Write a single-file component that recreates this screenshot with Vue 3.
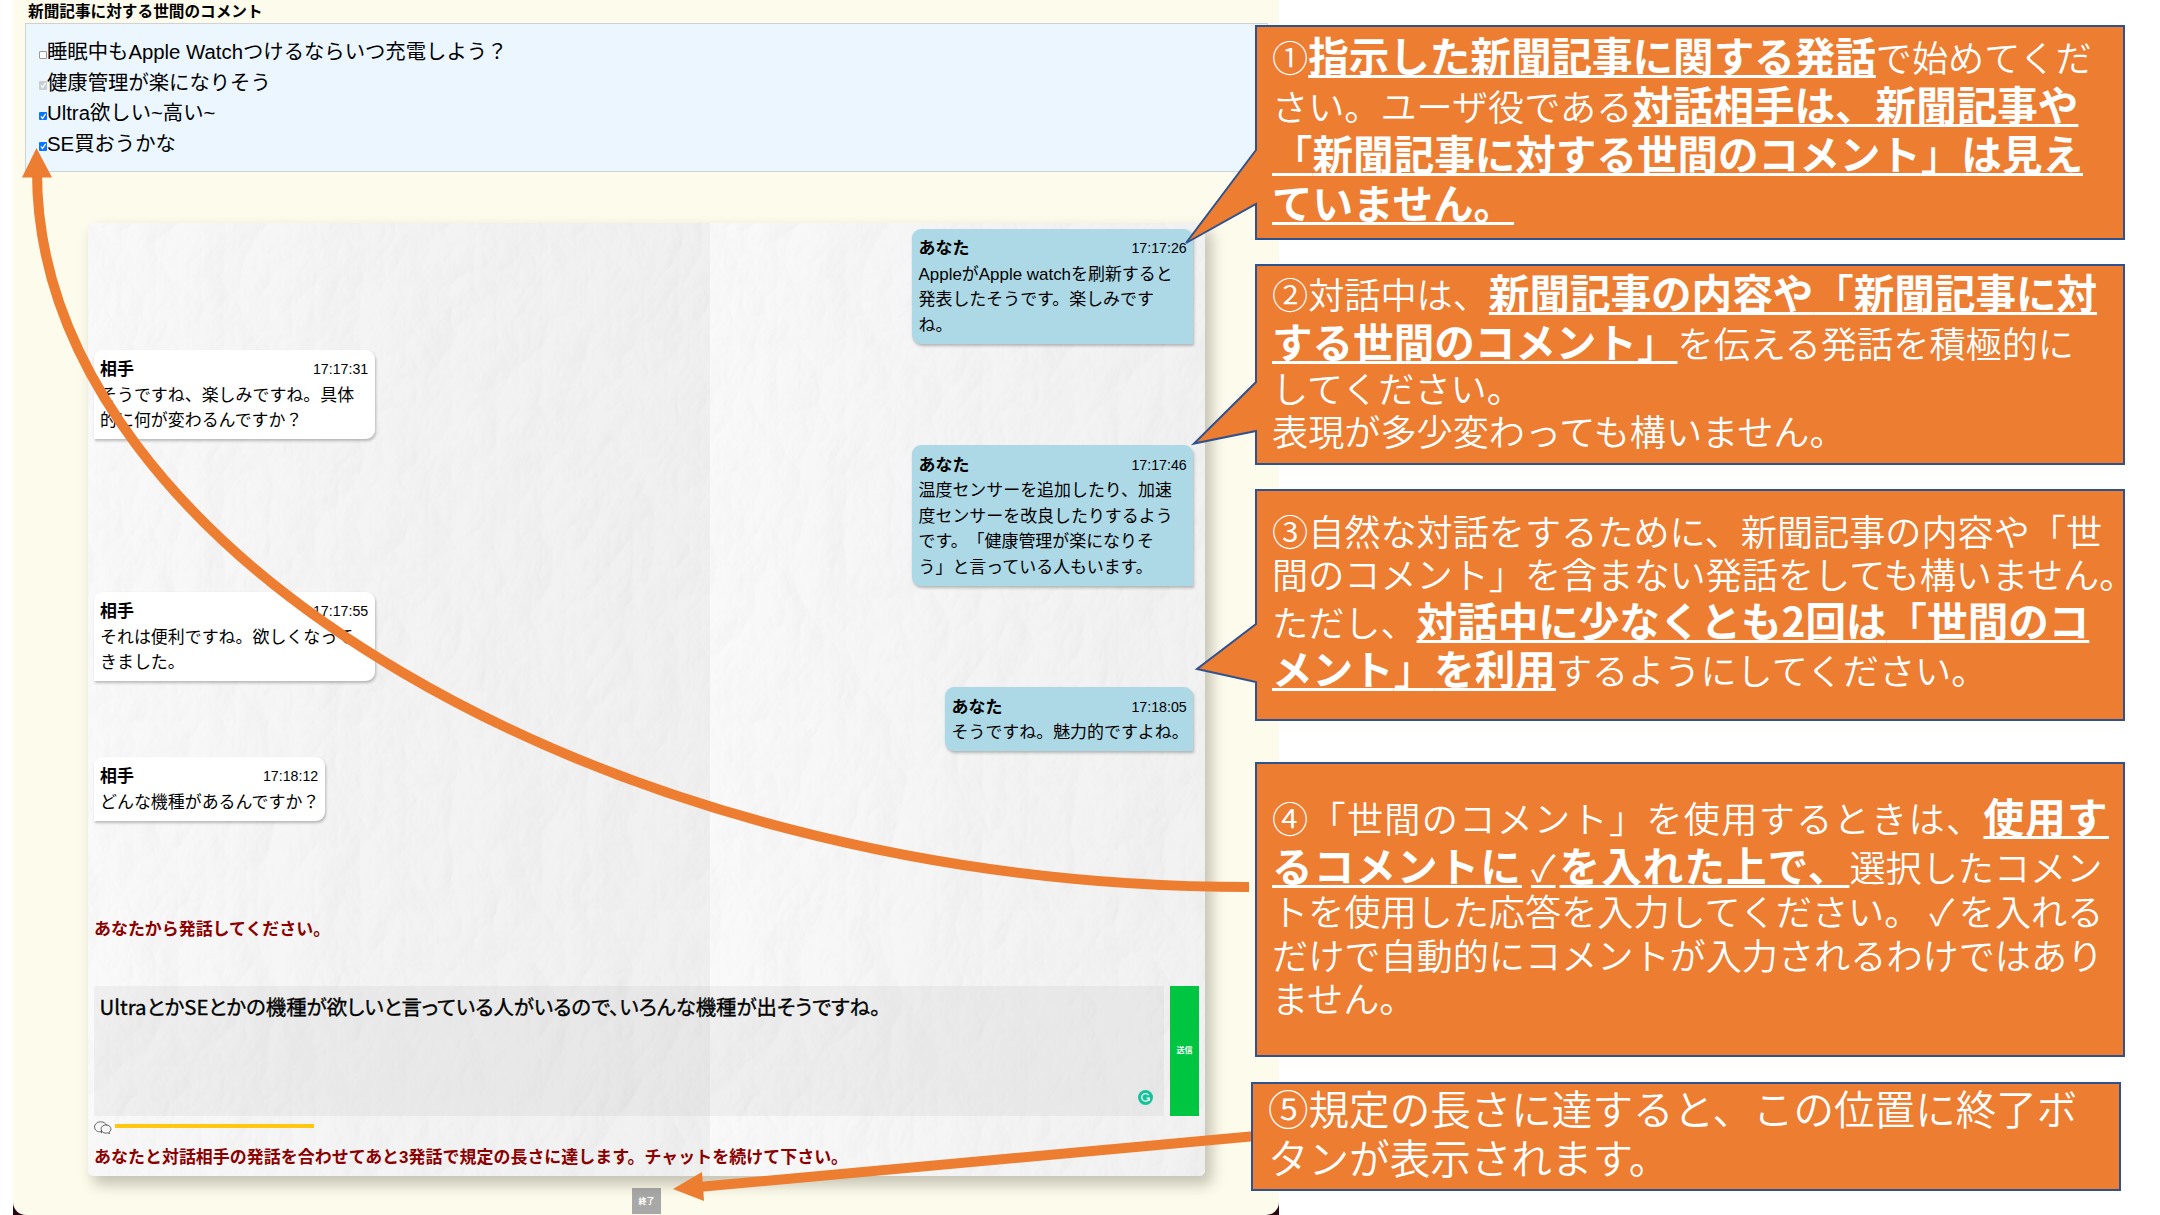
<script setup>
const comments = [
  { text: '睡眠中もApple Watchつけるならいつ充電しよう？', state: 'empty' },
  { text: '健康管理が楽になりそう', state: 'disabled' },
  { text: 'Ultra欲しい~高い~', state: 'checked' },
  { text: 'SE買おうかな', state: 'checked' },
]

const messages = [
  { me: true, time: '17:17:26', lines: ['AppleがApple watchを刷新すると', '発表したそうです。楽しみです', 'ね。'] },
  { me: false, time: '17:17:31', lines: ['そうですね、楽しみですね。具体', '的に何が変わるんですか？'] },
  { me: true, time: '17:17:46', lines: ['温度センサーを追加したり、加速', '度センサーを改良したりするよう', 'です。「健康管理が楽になりそ', 'う」と言っている人もいます。'] },
  { me: false, time: '17:17:55', lines: ['それは便利ですね。欲しくなって', 'きました。'] },
  { me: true, time: '17:18:05', short: true, lines: ['そうですね。魅力的ですよね。'] },
  { me: false, time: '17:18:12', short: true, lines: ['どんな機種があるんですか？'] },
]

// Each segment: [text, kind]; kind b = bold underlined, k = thin bracket inside bold text
const notes = [
  {
    id: 'n1',
    lines: [
      { big: true, segs: [['①', 'r'], ['指示した新聞記事に関する発話', 'b'], ['で始めてくだ', 'r']] },
      { big: true, segs: [['さい。ユーザ役である', 'r'], ['対話相手は、新聞記事や', 'b']] },
      { big: true, segs: [['「', 'k'], ['新聞記事に対する世間のコメント', 'b'], ['」', 'k'], ['は見え', 'b']] },
      { big: true, segs: [['ていません。', 'b']] },
    ],
  },
  {
    id: 'n2',
    lines: [
      { big: true, segs: [['②対話中は、', 'r'], ['新聞記事の内容や', 'b'], ['「', 'k'], ['新聞記事に対', 'b']] },
      { big: true, segs: [['する世間のコメント', 'b'], ['」', 'k'], ['を伝える発話を積極的に', 'r']] },
      { segs: [['してください。', 'r']] },
      { segs: [['表現が多少変わっても構いません。', 'r']] },
    ],
  },
  {
    id: 'n3',
    lines: [
      { segs: [['③自然な対話をするために、新聞記事の内容や「世', 'r']] },
      { segs: [['間のコメント」を含まない発話をしても構いません。', 'r']] },
      { big: true, segs: [['ただし、', 'r'], ['対話中に少なくとも2回は', 'b'], ['「', 'k'], ['世間のコ', 'b']] },
      { big: true, segs: [['メント', 'b'], ['」', 'k'], ['を利用', 'b'], ['するようにしてください。', 'r']] },
    ],
  },
  {
    id: 'n4',
    lines: [
      { big: true, wide: true, segs: [['④「世間のコメント」を使用するときは、', 'r'], ['使用す', 'b']] },
      { big: true, semi: true, segs: [['るコメントに', 'b'], ['✓', 'k tick'], ['を入れた上で、', 'b'], ['選択したコメン', 'r']] },
      { segs: [['トを使用した応答を入力してください。', 'r'], ['✓', 'r tick'], ['を入れる', 'r']] },
      { segs: [['だけで自動的にコメントが入力されるわけではあり', 'r']] },
      { segs: [['ません。', 'r']] },
    ],
  },
  {
    id: 'n5',
    lines: [
      { big: true, segs: [['⑤規定の長さに達すると、この位置に終了ボ', 'h']] },
      { big: true, segs: [['タンが表示されます。', 'h']] },
    ],
  },
]
</script>

<template>
  <div class="stage">
    <div class="desktop">
      <main class="window">
        <h1 class="title">新聞記事に対する世間のコメント</h1>
        <section class="comments">
          <label v-for="c in comments" :key="c.text" class="comment">
            <span class="box" :class="c.state">
              <svg v-if="c.state !== 'empty'" viewBox="0 0 8 8"><path d="M1.8 4.2 3.3 6 6.3 1.8" fill="none" stroke="#fff" stroke-width="1.2" /></svg>
            </span>
            <span>{{ c.text }}</span>
          </label>
        </section>

        <section class="chat">
          <svg class="paper" width="1117" height="953" viewBox="0 0 1117 953">
            <defs>
              <filter id="plaster" x="0" y="0" width="100%" height="100%" color-interpolation-filters="sRGB">
                <feTurbulence type="turbulence" baseFrequency="0.011 0.008" numOctaves="5" seed="14" />
                <feDiffuseLighting surfaceScale="2.2" diffuseConstant="1.1" lighting-color="#ffffff">
                  <feDistantLight azimuth="200" elevation="61" />
                </feDiffuseLighting>
              </filter>
              <linearGradient id="shade" x1="0" x2="1" y1="0" y2="0">
                <stop offset="0" stop-color="#f8f8f8" />
                <stop offset="0.5" stop-color="#f1f1f1" />
                <stop offset="1" stop-color="#ededed" />
              </linearGradient>
            </defs>
            <g v-for="x in [0, 622]" :key="x" :transform="`translate(${x} 0)`">
              <rect width="622" height="953" filter="url(#plaster)" />
              <rect width="622" height="953" fill="url(#shade)" opacity="0.82" />
            </g>
          </svg>
          <div class="log">
            <article v-for="m in messages" :key="m.time" class="bubble" :class="{ me: m.me, short: m.short }">
              <header><b>{{ m.me ? 'あなた' : '相手' }}</b><time>{{ m.time }}</time></header>
              <p v-for="l in m.lines" :key="l">{{ l }}</p>
            </article>
          </div>
          <p class="hint">あなたから発話してください。</p>
          <div class="entry">
            <div class="field">
              <span class="typed">UltraとかSEとかの機種が欲しいと言っている人がいるので、いろんな機種が出そうですね。</span>
              <svg class="gram" viewBox="0 0 15 15">
                <circle cx="7.5" cy="7.5" r="7.5" fill="#15c39a" />
                <path d="M10.6 5.2A3.8 3.8 0 1 0 11.2 8.2H8.6M11.2 8v3" fill="none" stroke="#fff" stroke-width="1.3" />
              </svg>
            </div>
            <button class="send">送信</button>
          </div>
          <div class="progress">
            <svg width="18" height="14" viewBox="0 0 18 14" fill="none" stroke="#555" stroke-width="0.9">
              <path d="M7.5 10.6C3 11.4.6 9 .6 6 .6 3 3.4.8 6.6.8c3 0 5.2 1.4 5.8 3.6" />
              <path d="M12 3.9c2.9 0 4.9 1.7 4.9 4 0 1.500-.7 2.500-1.800 3.200l.5 1.500-1.900-.7c-3.900.8-6.600-1-6.600-4 0-2.300 2-4 4.900-4Z" />
              <path d="M7.5 9v3.2" />
            </svg>
            <span class="meter"></span>
          </div>
          <p class="hint last">あなたと対話相手の発話を合わせてあと3発話で規定の長さに達します。チャットを続けて下さい。</p>
        </section>

        <button class="finish">終了</button>
      </main>
    </div>

    <svg class="overlay" width="2160" height="1215" viewBox="0 0 2160 1215">
      <g fill="none" stroke="#ed7d31" stroke-width="10">
        <path d="M1249 887C607 887 37 553 37 172" />
        <path d="M1256 1136 698 1187" />
      </g>
      <g fill="#ed7d31">
        <path d="M36.5 148 52 177.5H22Z" />
        <path d="M673 1189 702 1172 704 1201Z" />
      </g>
      <g fill="#ed7d31" stroke="#2f528f" stroke-width="2">
        <path d="M1256 26H2124V239H1256V204L1186 243 1256 150Z" />
        <path d="M1256 265H2124V464H1256V431L1194 443.5 1256 382Z" />
        <path d="M1256 490H2124V720H1256V682L1197 669 1256 624Z" />
        <path d="M1256 763H2124V1056H1256Z" />
        <path d="M1252 1083H2120V1190H1252Z" />
      </g>
    </svg>

    <aside v-for="n in notes" :key="n.id" class="note" :class="n.id">
      <div v-for="(l, i) in n.lines" :key="i" class="line" :class="{ big: l.big, wide: l.wide, semi: l.semi }">
        <span v-for="(s, j) in l.segs" :key="j" :class="s[1]">{{ s[0] }}</span>
      </div>
    </aside>
  </div>
</template>

<style>
html, body { margin: 0; background: #fff; }
</style>

<style scoped>
* { box-sizing: border-box; }
p, h1 { margin: 0; }
button { border: 0; padding: 0; color: #fff; font-family: inherit; font-weight: 700; }
.stage {
  position: relative; width: 2160px; height: 1215px; overflow: hidden; background: #fff;
  font-family: "Liberation Sans", "Noto Sans CJK JP", sans-serif; color: #000;
  text-spacing-trim: space-all;
}
.desktop { width: 1266px; height: 1215px; margin-left: 13px; background: linear-gradient(#fdfbec 0 1150px, #2b0711 1150px); }
.window {
  display: flex; flex-direction: column; height: 1215px; background: #fdfbec;
  border-radius: 0 0 13px 13px; overflow: hidden;
}
.title { height: 23px; padding-left: 15px; font-size: 15.65px; line-height: 23px; white-space: nowrap; }
.comments {
  width: 1243px; height: 149px; margin-left: 12px; padding: 13px 0 0 12.5px;
  border: 1px solid #ccd2d6; background: #ebf6ff;
}
.comment { display: flex; height: 30.5px; align-items: center; font-size: 20.35px; line-height: 30.5px; white-space: nowrap; }
.box { display: block; flex: none; width: 8.5px; height: 8.5px; margin-top: 5px; border-radius: 1px; }
.box svg { display: block; width: 8.5px; height: 8.5px; }
.empty { background: #fff; border: 1px solid #999; }
.disabled { background: #c9ced2; }
.checked { background: #0a75ff; }

.chat {
  position: relative; flex: none; display: flex; flex-direction: column;
  width: 1117px; height: 953px; margin: 51px 0 0 75px; padding: 6px 6px 0 6px;
  border-radius: 6px; background: #f0f0f0; box-shadow: 6px 8px 14px 1px rgba(80, 78, 60, .32);
}
.paper { position: absolute; left: 0; top: 0; border-radius: 6px; }
.chat > :not(.paper) { position: relative; }
.log { display: flex; flex-direction: column; align-items: flex-start; gap: 6px; height: 688px; }
.bubble {
  flex: none; width: 280.5px; padding: 7.3px 6.3px 5.3px 6px; border-radius: 9px 9px 9px 0; background: #fff;
  box-shadow: 1px 2px 3px rgba(0, 0, 0, .25); font-size: 16.95px; line-height: 25.6px; white-space: nowrap;
}
.bubble.me { align-self: flex-end; width: 281.5px; margin-right: 6px; padding-left: 7px; border-radius: 9px 9px 0 9px; background: #add8e6; }
.bubble.short { width: 230.5px; }
.bubble.me.short { width: 248.5px; }
.bubble header { display: flex; justify-content: space-between; height: 25.6px; }
.bubble time { font-size: 14.2px; }
.hint { height: 26px; font-size: 16.95px; line-height: 26px; font-weight: 700; color: #8b0000; white-space: nowrap; }
.entry { display: flex; justify-content: space-between; height: 130px; margin-top: 43px; }
.field { position: relative; width: 1069.5px; padding: 5px 5.5px; border-radius: 3px 0 0 0; background: rgba(110, 110, 110, .07); }
.typed {
  display: block; font: 400 20.42px/30px "Noto Sans CJK JP", sans-serif; font-feature-settings: "palt";
  white-space: nowrap; -webkit-text-stroke: .35px #000;
}
.gram { position: absolute; left: 1044px; top: 104px; width: 15px; height: 15px; }
.send { width: 29px; background: #00c541; font-size: 8px; padding-bottom: 3px; }
.progress { display: flex; gap: 3px; height: 29px; padding-top: 5px; }
.meter { width: 199px; height: 4px; margin-top: 3px; background: #ffc70f; }
.last { letter-spacing: .04px; }
.finish { flex: none; width: 29px; height: 26px; margin: 12px 0 0 619px; background: #a8a8a8; font-size: 8px; padding-bottom: 2px; }

.overlay { position: absolute; left: 0; top: 0; }
.note {
  position: absolute; left: 1255px; width: 870px; display: flex; flex-direction: column; justify-content: center;
  padding: 0 0 8px 17px; color: #fff; font-family: "Noto Sans CJK JP", sans-serif; font-weight: 350;
  white-space: nowrap;
}
.n1 { top: 25.5px; height: 215px; }
.n2 { top: 264px; height: 201px; }
.n3 { top: 489px; height: 232px; }
.n4 { top: 762px; height: 295px; }
.n5 { top: 1082px; height: 109px; left: 1251px; }
.line { height: 43.3px; font-size: 36.15px; line-height: 43.3px; }
.line.big { height: 48.8px; font-size: 40.55px; line-height: 48.8px; }
.line span { line-height: 0; }
.r { font-size: 36.15px; }
.b, .k { text-decoration: underline 3px; text-underline-offset: 2.5px; text-decoration-skip-ink: none; }
.b { font-weight: 700; }
.k { font-weight: 500; }
.wide .r, .wide .b { letter-spacing: 1.3px; }
.semi .b { letter-spacing: 1.1px; }
.k.tick { padding: 0 4px 0 9px; font-weight: 400; font-size: 36px; }
.r.tick { padding: 0 5px 0 9px; }
</style>
